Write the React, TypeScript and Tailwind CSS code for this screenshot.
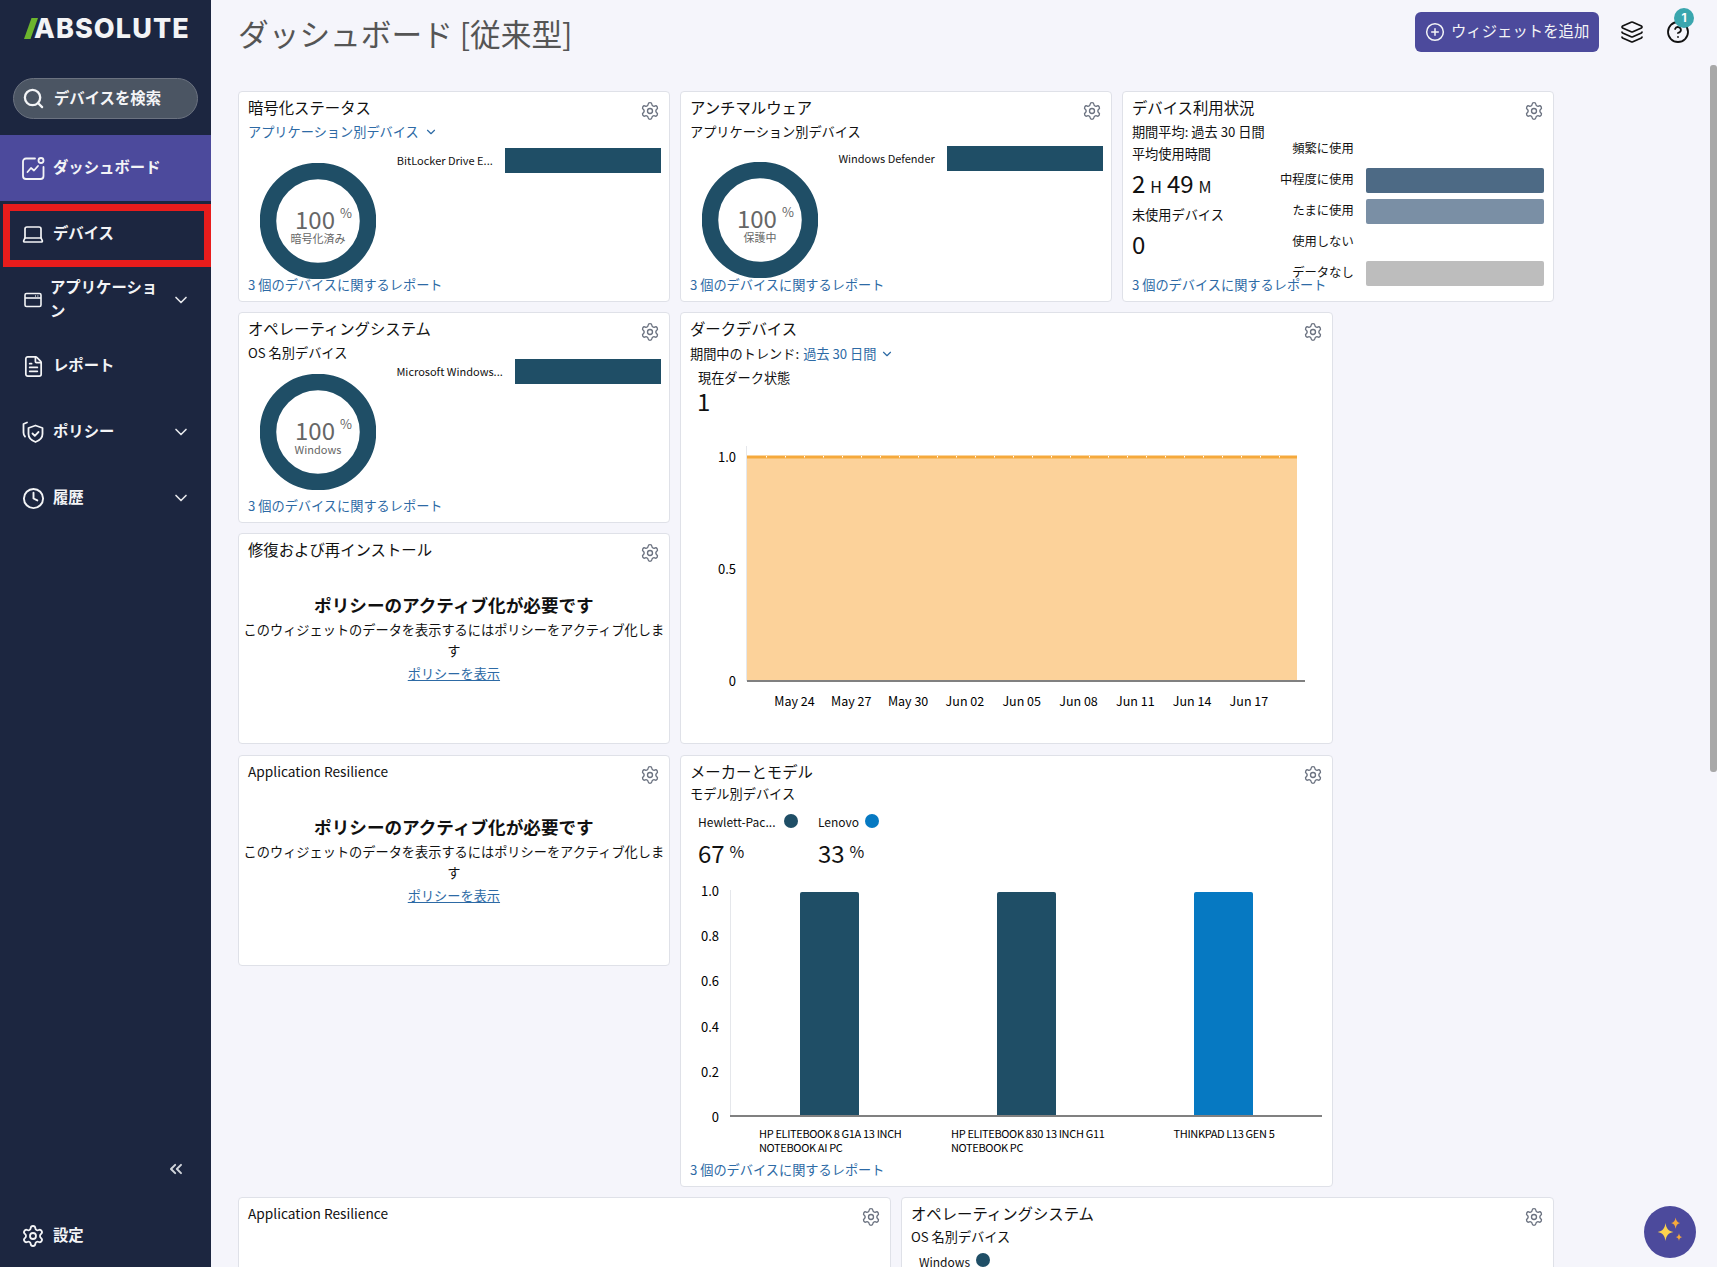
import type { ReactNode } from "react";
import {
  ChevronDown,
  ChevronsLeft,
  CircleHelp,
  CirclePlus,
  Clock,
  FileText,
  Laptop,
  Layers,
  Search,
  Settings,
} from "lucide-react";

const DashIcon = () => (
  <svg width="24" height="24" viewBox="0 0 24 24" fill="none" stroke="currentColor" strokeWidth="1.8" strokeLinecap="round" strokeLinejoin="round">
    <path d="M14 2.500H5a3 3 0 0 0-3 3V20a3 3 0 0 0 3 3h14.500a3 3 0 0 0 3-3v-9" />
    <circle cx="20" cy="4.500" r="2.500" />
    <path d="M6.500 16l3.500-4 3 2.500 4-4.500" />
  </svg>
);

const AppIcon = () => (
  <svg width="20" height="20" viewBox="0 0 20 20" fill="none" stroke="currentColor" strokeWidth="1.6">
    <rect x="2" y="3.500" width="16" height="13" rx="1.500" />
    <path d="M2 8h16" />
    <path d="M12 6h.8M14.500 6h.8" />
  </svg>
);

const PolicyIcon = () => (
  <svg width="24" height="24" viewBox="0 0 24 24" fill="none" stroke="currentColor" strokeWidth="1.8" strokeLinecap="round" strokeLinejoin="round">
    <path d="M14.500 5.500l7 2.500v6c0 4-3 6.500-7 8-4-1.500-7-4-7-8V8z" />
    <path d="M11.500 13.500l2.300 2.300 3.700-3.800" />
    <path d="M6 2.500L2.500 4v8.500c0 1.500.5 3 1.500 4" />
  </svg>
);

const Sparkles = () => (
  <svg width="36" height="36" viewBox="0 0 32 32">
    <path d="M12 8c.8 5 2.500 7.200 7 8-4.500.8-6.200 3-7 8-.8-5-2.500-7.200-7-8 4.500-.8 6.200-3 7-8z" fill="#fdd34d" />
    <path d="M21 3c.5 3 1.500 4.300 4 5-2.500.7-3.500 2-4 5-.5-3-1.500-4.300-4-5 2.500-.7 3.500-2 4-5z" fill="#f5a93c" />
    <path d="M24 17c.4 2.200 1 3 3 3.500-2 .5-2.600 1.300-3 3.500-.4-2.200-1-3-3-3.500 2-.5 2.600-1.300 3-3.500z" fill="#f5a93c" />
  </svg>
);

const Logo = () => (
  <div className="flex h-[21px] items-center pl-[24px]">
    <svg width="14" height="21" viewBox="0 0 14 21" className="shrink-0">
      <path d="M7.500 0H14L6.500 21H0z" fill="#6cb52d" />
    </svg>
    <span className="-ml-[4px] text-[27px] leading-[21px] font-extrabold tracking-[1.1px] text-[#f3f4f6]">ABSOLUTE</span>
  </div>
);

function NavItem({
  icon,
  label,
  active,
  chevron,
  textClass,
}: {
  icon: ReactNode;
  label: string;
  active?: boolean;
  chevron?: boolean;
  textClass?: string;
}) {
  return (
    <div className={`flex h-[66px] items-center pr-[20px] pl-[21px] text-[15.36px] leading-[24px] font-semibold text-[#f3f4f6] ${active ? "bg-[#4c4a9c]" : ""}`}>
      <span className="flex w-[24px] shrink-0 justify-center">{icon}</span>
      <span className={textClass ?? "ml-[8px] flex-1"}>{label}</span>
      {chevron && <ChevronDown className="ml-auto h-[20px] w-[20px] shrink-0 text-[#e5e7eb]" strokeWidth={2} />}
    </div>
  );
}

const Sidebar = () => (
  <aside className="relative flex h-screen w-[211px] shrink-0 flex-col bg-[#1c2640] pt-[18px] font-['Inter','Noto_Sans_CJK_JP',sans-serif]">
    <Logo />
    <div className="mx-[13px] mt-[39px] flex h-[41px] items-center gap-[9px] rounded-full border border-[#6b7280] bg-[#4b5563] pl-[8px] text-[15.36px] font-semibold text-[#f3f4f6]">
      <Search className="h-[23px] w-[23px]" strokeWidth={2.4} />
      <span>デバイスを検索</span>
    </div>
    <nav className="mt-[16px]">
      <NavItem active icon={<DashIcon />} label="ダッシュボード" />
      <NavItem icon={<Laptop className="h-[24px] w-[24px]" strokeWidth={1.7} />} label="デバイス" />
      <NavItem chevron icon={<AppIcon />} label="アプリケーション" textClass="ml-[5px] w-[110px]" />
      <NavItem icon={<FileText className="h-[23px] w-[23px]" strokeWidth={1.8} />} label="レポート" />
      <NavItem chevron icon={<PolicyIcon />} label="ポリシー" />
      <NavItem chevron icon={<Clock className="h-[23px] w-[23px]" strokeWidth={2} />} label="履歴" />
    </nav>
    <div className="mt-auto flex justify-end pr-[25px]">
      <ChevronsLeft className="h-[20px] w-[20px] text-[#d1d5db]" strokeWidth={2.4} />
    </div>
    <div className="mt-[45px] mb-[19px] flex items-center gap-[8px] pl-[21px] text-[15.36px] font-semibold text-[#f3f4f6]">
      <Settings className="h-[24px] w-[24px]" strokeWidth={1.8} />
      <span>設定</span>
    </div>
    {/* red highlight over the devices row */}
    <div className="pointer-events-none absolute top-[204px] left-[3px] h-[63px] w-[208px] border-[7px] border-[#e81c1c]" />
  </aside>
);

function Card({ className, title, titleClass, children }: { className: string; title: string; titleClass?: string; children?: ReactNode }) {
  return (
    <div className={`relative flex flex-col rounded-[4px] border border-[#dfe1e8] bg-white pt-[5px] pr-[8px] pl-[9px] ${className}`}>
      <div className={`h-[20px] leading-[20px] whitespace-nowrap text-[#111] ${titleClass ?? "text-[15.36px]"}`}>{title}</div>
      <Settings className="absolute top-[9px] right-[9px] h-[20px] w-[20px] text-[#6b7280]" strokeWidth={1.6} />
      {children}
    </div>
  );
}

const Report = () => (
  <div className="mt-auto mb-[6px] h-[20px] text-[13.2px] leading-[20px] whitespace-nowrap text-[#2d6aa5]">3 個のデバイスに関するレポート</div>
);

function Donut({ label }: { label: string }) {
  return (
    <div className="relative h-[116px] w-[116px] shrink-0 text-[#666]">
      <svg width="116" height="116" viewBox="0 0 116 116">
        <circle cx="58" cy="58" r="50" fill="none" stroke="#1f4e66" strokeWidth="16.500" />
      </svg>
      <div className="absolute inset-0 flex flex-col items-center justify-center pt-[10px]">
        <div className="relative right-[3px] h-[24px] text-[24px] leading-[24px]">
          100
          <span className="absolute top-[-3px] right-[-17px] text-[13px] leading-[18px]">%</span>
        </div>
        <div className="text-[11px] leading-[14px]">{label}</div>
      </div>
    </div>
  );
}

function DonutCard({
  className,
  title,
  sub,
  label,
  barLabel,
  barWidth,
  barClass,
  donutClass,
}: {
  className: string;
  title: string;
  sub: ReactNode;
  label: string;
  barLabel: string;
  barWidth: string;
  barClass: string;
  donutClass: string;
}) {
  return (
    <Card className={className} title={title}>
      <div className="mt-[5px] h-[20px] text-[13.2px] leading-[20px]">{sub}</div>
      <div className="flex h-0 flex-1">
        <div className={`ml-[12px] ${donutClass}`}>
          <Donut label={label} />
        </div>
        <div className={`flex flex-1 items-center justify-end gap-[12px] self-start ${barClass}`}>
          <span className="text-[11px] whitespace-nowrap text-[#111]">{barLabel}</span>
          <div className={`h-[25px] bg-[#1f4e66] ${barWidth}`} />
        </div>
      </div>
      <Report />
    </Card>
  );
}

const usage = [
  { label: "頻繁に使用", color: "" },
  { label: "中程度に使用", color: "bg-[#4d6a85]" },
  { label: "たまに使用", color: "bg-[#7a8fa5]" },
  { label: "使用しない", color: "" },
  { label: "データなし", color: "bg-[#bdbdbd]" },
];

const UsageCard = () => (
  <div className="relative col-span-2 col-start-5 row-start-1 flex rounded-[4px] border border-[#dfe1e8] bg-white pt-[5px] pr-[9px] pl-[9px] text-[#111]">
    <div className="flex min-w-0 flex-1 flex-col">
      <div className="h-[20px] text-[15.36px] leading-[20px] whitespace-nowrap">デバイス利用状況</div>
      <div className="mt-[5px] h-[20px] text-[13.2px] leading-[20px] whitespace-nowrap">期間平均: 過去 30 日間</div>
      <div className="mt-[2px] h-[20px] text-[13.2px] leading-[20px] whitespace-nowrap">平均使用時間</div>
      <div className="mt-[3px] h-[32px] leading-[32px] whitespace-nowrap">
        <span className="text-[24px]">2</span>
        <span className="ml-[5px] text-[16px]">H</span>
        <span className="ml-[5px] text-[24px]">49</span>
        <span className="ml-[5px] text-[16px]">M</span>
      </div>
      <div className="mt-[6px] h-[20px] text-[13.2px] leading-[20px] whitespace-nowrap">未使用デバイス</div>
      <div className="mt-[3px] h-[32px] text-[24px] leading-[32px]">0</div>
      <Report />
    </div>
    <div className="flex w-[290px] shrink-0 flex-col gap-[6px] pt-[40px]">
      {usage.map((u) => (
        <div key={u.label} className="flex h-[25px] items-center gap-[12px]">
          <span className="w-[100px] pb-[2px] text-right text-[12.3px] whitespace-nowrap">{u.label}</span>
          <div className={`h-[25px] w-[178px] rounded-[2px] ${u.color}`} />
        </div>
      ))}
    </div>
    <Settings className="absolute top-[9px] right-[9px] h-[20px] w-[20px] text-[#6b7280]" strokeWidth={1.6} />
  </div>
);

const PolicyNeeded = () => (
  <div className="-mr-[8px] -ml-[9px] text-center text-[13.2px] text-[#111]">
    <div className="mt-[34px] h-[24px] text-[17.6px] leading-[24px] font-bold">ポリシーのアクティブ化が必要です</div>
    <div className="mx-auto mt-[2px] w-[426px] leading-[21px]">このウィジェットのデータを表示するにはポリシーをアクティブ化します</div>
    <div className="mt-[2px] leading-[21px] text-[#2d6aa5] underline">ポリシーを表示</div>
  </div>
);

const dates = ["May 24", "May 27", "May 30", "Jun 02", "Jun 05", "Jun 08", "Jun 11", "Jun 14", "Jun 17"];

function DarkChart() {
  // svg origin sits at x=682, y=432 of the page
  const dots = Array.from({ length: 28 }, (_, i) => 65 + 19 * (i + 1));
  return (
    <svg width="650" height="290" viewBox="0 0 650 290" className="-mx-[8px] mt-[15px] block max-w-none text-[#111]">
      <path d="M64.500 14V249" stroke="#e5e7eb" />
      <rect x="65" y="25" width="550" height="224" fill="#fcd29a" />
      <path d="M65 25H615" stroke="#f5a93c" strokeWidth="3" />
      {dots.map((x) => (
        <rect key={x} x={x} y="24" width="1" height="1.500" fill="#fff" />
      ))}
      <path d="M65 249H623" stroke="#808080" strokeWidth="2" />
      <text x="54" y="30" textAnchor="end" fontSize="13">1.0</text>
      <text x="54" y="142" textAnchor="end" fontSize="13">0.5</text>
      <text x="54" y="254" textAnchor="end" fontSize="13">0</text>
      {dates.map((d, i) => (
        <text key={d} x={112.500 + i * 56.800} y="274" textAnchor="middle" fontSize="12.500">{d}</text>
      ))}
    </svg>
  );
}

function ModelChart() {
  // svg origin sits at x=682, y=876 of the page
  const ticks = ["1.0", "0.8", "0.6", "0.4", "0.2", "0"];
  const bars = [
    { x: 118, fill: "#1f4e66" },
    { x: 315, fill: "#1f4e66" },
    { x: 512, fill: "#0679c2" },
  ];
  return (
    <svg width="650" height="280" viewBox="0 0 650 280" className="-mx-[8px] mt-[7px] block max-w-none text-[#111]">
      <path d="M48.500 14V240" stroke="#e5e7eb" />
      {ticks.map((t, i) => (
        <text key={t} x="37" y={20 + i * 45.200} textAnchor="end" fontSize="13">{t}</text>
      ))}
      {bars.map((b) => (
        <path key={b.x} d={`M${b.x} 240V18a2 2 0 0 1 2-2h55a2 2 0 0 1 2 2V240z`} fill={b.fill} />
      ))}
      <path d="M48 240H640" stroke="#808080" strokeWidth="2" />
      <g fontSize="11" letterSpacing="-0.35">
        <text x="77" y="262">HP ELITEBOOK 8 G1A 13 INCH</text>
        <text x="77" y="276">NOTEBOOK AI PC</text>
        <text x="269" y="262">HP ELITEBOOK 830 13 INCH G11</text>
        <text x="269" y="276">NOTEBOOK PC</text>
        <text x="542" y="262" textAnchor="middle">THINKPAD L13 GEN 5</text>
      </g>
    </svg>
  );
}

const Legend = ({ name, value, dot }: { name: string; value: string; dot: string }) => (
  <div className="w-[120px]">
    <div className="flex h-[20px] items-center text-[12px] leading-[20px] text-[#111]">
      <span>{name}</span>
      <span className={`mb-[2px] h-[14px] w-[14px] rounded-full ${dot}`} />
    </div>
    <div className="mt-[5px] h-[32px] leading-[32px] text-[#111]">
      <span className="text-[24px]">{value}</span>
      <span className="relative -top-[5px] ml-[5px] text-[16px]">%</span>
    </div>
  </div>
);

export default function App() {
  return (
    <div className="flex h-screen overflow-hidden bg-[#f5f5fb] font-['Noto_Sans_CJK_JP',sans-serif]">
      <Sidebar />
      <main className="relative h-screen flex-1 overflow-hidden pl-[27px]">
        <header className="flex h-[91px] items-start">
          <h1 className="mt-[11px] text-[30.7px] leading-[44px] text-[#555]">ダッシュボード [従来型]</h1>
          <div className="mt-[12px] ml-[auto] flex items-center pr-[27px] font-['Inter','Noto_Sans_CJK_JP',sans-serif]">
            <button className="flex h-[40px] w-[184px] items-center gap-[6px] rounded-[6px] bg-[#4c4a9c] pl-[10px] text-[15.36px] text-[#f3f4f6]">
              <CirclePlus className="h-[20px] w-[20px]" strokeWidth={1.8} />
              <span>ウィジェットを追加</span>
            </button>
            <Layers className="ml-[21px] h-[24px] w-[24px] text-[#111]" strokeWidth={1.7} />
            <div className="relative ml-[22px] h-[24px] w-[24px]">
              <CircleHelp className="h-[24px] w-[24px] text-[#111]" strokeWidth={1.8} />
              <span className="absolute -top-[12px] left-[8px] flex h-[20px] w-[20px] items-center justify-center rounded-full bg-[#3aa6ae] text-[12px] font-bold text-white">1</span>
            </div>
          </div>
        </header>

        <div className="grid grid-cols-[repeat(6,210.8px)] auto-rows-[211px] gap-x-[10.2px] gap-y-[10.2px]">
          <DonutCard
            className="col-span-2 col-start-1 row-start-1"
            title="暗号化ステータス"
            sub={
              <span className="flex items-center gap-[5px] text-[#2d6aa5]">
                アプリケーション別デバイス
                <ChevronDown className="h-[14px] w-[14px]" />
              </span>
            }
            label="暗号化済み"
            barLabel="BitLocker Drive E..."
            barWidth="w-[156px]"
            barClass="mt-[6px]"
            donutClass="mt-[21px]"
          />
          <DonutCard
            className="col-span-2 col-start-3 row-start-1"
            title="アンチマルウェア"
            sub={<span className="text-[#111]">アプリケーション別デバイス</span>}
            label="保護中"
            barLabel="Windows Defender"
            barWidth="w-[156px]"
            barClass="mt-[4px]"
            donutClass="mt-[20px]"
          />
          <UsageCard />
          <DonutCard
            className="col-span-2 col-start-1 row-start-2"
            title="オペレーティングシステム"
            sub={<span className="text-[#111]">OS 名別デバイス</span>}
            label="Windows"
            barLabel="Microsoft Windows..."
            barWidth="w-[146px]"
            barClass="mt-[-4px]"
            donutClass="mt-[11px]"
          />
          <Card className="col-span-3 col-start-3 row-span-2 row-start-2" title="ダークデバイス">
            <div className="mt-[6px] flex h-[20px] items-center gap-[4px] text-[13.2px] leading-[20px] text-[#111]">
              期間中のトレンド:
              <span className="flex items-center gap-[4px] text-[#2d6aa5]">
                過去 30 日間
                <ChevronDown className="h-[14px] w-[14px]" />
              </span>
            </div>
            <div className="mt-[4px] ml-[8px] h-[20px] text-[13.2px] leading-[20px] text-[#111]">現在ダーク状態</div>
            <div className="-mt-[3px] ml-[7px] h-[32px] text-[24px] leading-[32px] text-[#111]">1</div>
            <DarkChart />
          </Card>
          <Card className="col-span-2 col-start-1 row-start-3" title="修復および再インストール">
            <PolicyNeeded />
          </Card>
          <Card className="col-span-2 col-start-1 row-start-4" title="Application Resilience" titleClass="text-[13.7px]">
            <PolicyNeeded />
          </Card>
          <Card className="col-span-3 col-start-3 row-span-2 row-start-4" title="メーカーとモデル">
            <div className="mt-[3px] h-[20px] text-[13.2px] leading-[20px] text-[#111]">モデル別デバイス</div>
            <div className="mt-[8px] ml-[8px] flex">
              <Legend name="Hewlett-Pac..." value="67" dot="ml-[9px] bg-[#1f4e66]" />
              <Legend name="Lenovo" value="33" dot="ml-[6px] bg-[#0679c2]" />
            </div>
            <ModelChart />
            <Report />
          </Card>
          <Card className="col-span-3 col-start-1 row-start-6" title="Application Resilience" titleClass="text-[13.7px]" />
          <Card className="col-span-3 col-start-4 row-start-6" title="オペレーティングシステム">
            <div className="mt-[4px] h-[20px] text-[13.2px] leading-[20px] text-[#111]">OS 名別デバイス</div>
            <div className="mt-[6px] ml-[8px] flex items-center text-[12px] text-[#111]">
              <span>Windows</span>
              <span className="mb-[4px] ml-[6px] h-[14px] w-[14px] rounded-full bg-[#1f4e66]" />
            </div>
          </Card>
        </div>

        {/* page scrollbar thumb */}
        <div className="absolute top-[65px] right-0 h-[707px] w-[7px] rounded-[3px] bg-[#a8a8a8]" />
        {/* assistant button */}
        <div className="absolute right-[21px] bottom-[9px] flex h-[52px] w-[52px] items-center justify-center rounded-full bg-[#4c4a9c]">
          <Sparkles />
        </div>
      </main>
    </div>
  );
}
